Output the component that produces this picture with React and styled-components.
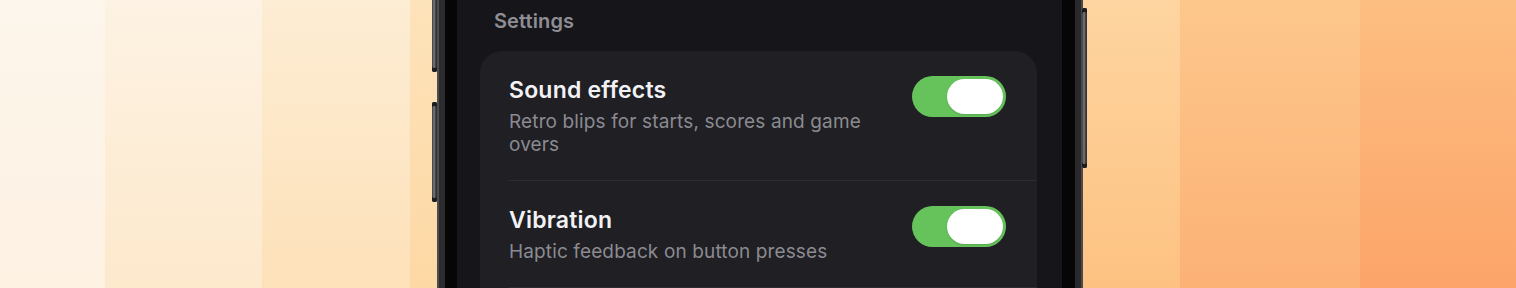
import React from "react";
import styled, { createGlobalStyle } from "styled-components";

const GlobalStyle = createGlobalStyle`
  html, body {
    margin: 0;
    padding: 0;
    background: #fdd8a5;
  }
  body {
    font-family: Inter, "Noto Sans", "Liberation Sans", sans-serif;
    -webkit-font-smoothing: antialiased;
  }
  * { box-sizing: border-box; }
`;

const stripes = [
  { x: 0, w: 105, top: "#fdf6ec", bottom: "#fdf1e2" },
  { x: 105, w: 157, top: "#fdf2e3", bottom: "#fde9cc" },
  { x: 262, w: 148, top: "#fdedd4", bottom: "#fde1b9" },
  { x: 410, w: 30, top: "#fde3ba", bottom: "#fdd8a4" },
  { x: 440, w: 640, top: "#fdd8a5", bottom: "#fdca90" },
  { x: 1080, w: 100, top: "#fed5a0", bottom: "#fdc282" },
  { x: 1180, w: 180, top: "#fdc78c", bottom: "#fcb175" },
  { x: 1360, w: 156, top: "#fdbe81", bottom: "#fca469" },
];

const stripeBackground = stripes
  .map(
    (s) =>
      `linear-gradient(to bottom, ${s.top}, ${s.bottom}) ${s.x}px 0 / ${s.w}px 100% no-repeat`
  )
  .join(", ");

const Stage = styled.div`
  width: 1516px;
  height: 288px;
  overflow: hidden;
  display: flex;
  padding-left: 437px;
  background: ${stripeBackground};
`;

const Phone = styled.div`
  position: relative;
  flex: 0 0 646px;
  display: flex;
  border-left: 2px solid #4d4d51;
  border-right: 2px solid #4a4a4d;
  background: linear-gradient(to right, #2c2c2e, #1d1d1f 70%, #2a2a2c);
  padding: 0 6px;
`;

const SideButton = styled.div`
  position: absolute;
  ${(p) => (p.$side === "left" ? "left: -7px;" : "right: -6px;")}
  top: ${(p) => p.$top}px;
  width: 5px;
  height: ${(p) => p.$height}px;
  border-radius: 2px;
  background: linear-gradient(
    to right,
    #3a3a3c,
    #7b7b7e 40%,
    #454547 70%,
    #2a2a2c
  );
  box-shadow: inset 0 -4px 0 #1c1c1e, inset 0 4px 0 #1c1c1e;
`;

const Bezel = styled.div`
  flex: 1;
  display: flex;
  background: #060607;
  padding: 0 13px 0 12px;
`;

const Screen = styled.div`
  flex: 1;
  display: flex;
  flex-direction: column;
  background: #15151a;
  padding: 9px 25px 0 23px;
  overflow: hidden;
`;

const SectionHeader = styled.div`
  margin-left: 14px;
  font-size: 20px;
  line-height: 24px;
  font-weight: 600;
  color: #8e8e94;
  letter-spacing: 0.1px;
`;

const Card = styled.div`
  margin-top: 18px;
  flex-shrink: 0;
  background: #1f1f24;
  border-radius: 22px;
  padding-bottom: 60px;
`;

const Row = styled.div`
  display: flex;
  align-items: flex-start;
  justify-content: space-between;
  gap: 20px;
  padding: 25px 31px 24px 29px;
`;

const TextCol = styled.div`
  max-width: 378px;
`;

const Title = styled.div`
  font-size: 23px;
  line-height: 28px;
  font-weight: 600;
  color: #f2f2f5;
  letter-spacing: 0.2px;
`;

const Description = styled.div`
  margin-top: 6px;
  font-size: 19px;
  line-height: 23px;
  color: #8b8b91;
  letter-spacing: 0.13px;
`;

const Toggle = styled.div`
  flex: 0 0 94px;
  height: 41px;
  border-radius: 21px;
  background: ${(p) => (p.$on ? "#66c35c" : "#3a3a3f")};
  display: flex;
  justify-content: ${(p) => (p.$on ? "flex-end" : "flex-start")};
  padding: 3px;
`;

const Knob = styled.div`
  width: 56px;
  height: 35px;
  border-radius: 18px;
  background: #ffffff;
  box-shadow: 0 1px 2px rgba(0, 0, 0, 0.15);
`;

const Divider = styled.div`
  height: 1px;
  margin-left: 29px;
  background: #2c2c31;
`;

const settings = [
  {
    title: "Sound effects",
    description: "Retro blips for starts, scores and game overs",
    on: true,
  },
  {
    title: "Vibration",
    description: "Haptic feedback on button presses",
    on: true,
  },
];

export default function App() {
  return (
    <>
      <GlobalStyle />
      <Stage>
        <Phone>
          <SideButton $side="left" $top={-20} $height={92} />
          <SideButton $side="left" $top={102} $height={100} />
          <SideButton $side="right" $top={8} $height={160} />
          <Bezel>
            <Screen>
              <SectionHeader>Settings</SectionHeader>
              <Card>
                {settings.map((s, i) => (
                  <React.Fragment key={s.title}>
                    {i > 0 && <Divider />}
                    <Row>
                      <TextCol>
                        <Title>{s.title}</Title>
                        <Description>{s.description}</Description>
                      </TextCol>
                      <Toggle $on={s.on}>
                        <Knob />
                      </Toggle>
                    </Row>
                  </React.Fragment>
                ))}
                <Divider />
              </Card>
            </Screen>
          </Bezel>
        </Phone>
      </Stage>
    </>
  );
}
